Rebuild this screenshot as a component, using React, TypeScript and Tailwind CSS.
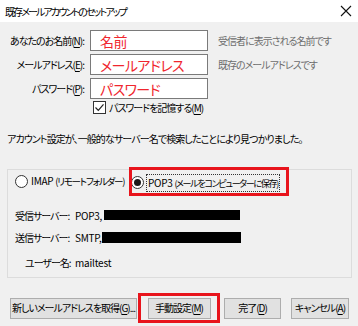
import React from 'react';

const Mn: React.FC<{ k: string }> = ({ k }) => <span className="underline underline-offset-2">{k}</span>;

const Radio: React.FC<{ checked?: boolean }> = ({ checked }) => (
  <span className="w-[13px] h-[13px] rounded-full border border-[#333] bg-white flex items-center justify-center shrink-0">
    {checked && <span className="w-[7px] h-[7px] rounded-full bg-[#1a1a1a]" />}
  </span>
);

const Field: React.FC<{ label: React.ReactNode; value: string; hint?: string }> = ({ label, value, hint }) => (
  <div className="flex items-center h-[21px]">
    <div className="w-[85px] text-right pr-[1px]">{label}</div>
    <div className="ml-[5px] w-[118px] h-[21px] bg-white border border-[#7a7a7a] flex items-center pl-[9px] text-[14px] tracking-[-0.6px] text-[#f0262e] leading-none">
      {value}
    </div>
    {hint && <div className="ml-[10px] text-[#6d6d6d]">{hint}</div>}
  </div>
);

const Button: React.FC<{ w: string; children: React.ReactNode }> = ({ w, children }) => (
  <button className={`${w} shrink-0 h-[21px] bg-[#e1e1e1] border border-[#adadad] flex items-center justify-center leading-none`}>
    {children}
  </button>
);

const App: React.FC = () => {
  return (
    <div className="w-[358px] h-[326px] bg-[#f0f0f0] text-[10px] tracking-[-1px] whitespace-nowrap text-black font-['Noto_Sans_CJK_JP','Noto_Sans',sans-serif] [font-feature-settings:'palt'] overflow-hidden">
      <div className="h-[22px] bg-white flex items-center justify-between pl-[5px] pr-[5px]">
        <span className="tracking-[-1.9px]">既存メールアカウントのセットアップ</span>
        <svg width="12" height="12" viewBox="0 0 12 12" className="mr-[1px]">
          <path d="M1 1 L11 11 M11 1 L1 11" stroke="#111" strokeWidth="1.1" />
        </svg>
      </div>

      <div className="mt-[8px] flex flex-col gap-[3px]">
        <Field label={<>あなたのお名前(<Mn k="N" />):</>} value="名前" hint="受信者に表示される名前です" />
        <Field label={<>メールアドレス(<Mn k="E" />):</>} value="メールアドレス" hint="既存のメールアドレスです" />
        <Field label={<>パスワード(<Mn k="P" />):</>} value="パスワード" />
      </div>

      <div className="mt-[2px] ml-[93px] flex items-center gap-[3px] h-[13px]">
        <span className="w-[13px] h-[13px] border border-[#333] bg-white flex items-center justify-center">
          <svg width="11" height="11" viewBox="0 0 11 11">
            <path d="M1.5 5.5 L4.3 8.3 L9.5 2.3" stroke="#222" strokeWidth="1.2" fill="none" />
          </svg>
        </span>
        <span>パスワードを記憶する(<Mn k="M" />)</span>
      </div>

      <div className="mt-[16px] ml-[7px] h-[16px] flex items-center tracking-[-0.9px]">
        アカウント設定が、一般的なサーバー名で検索したことにより見つかりました。
      </div>

      <div className="relative mt-[23px] ml-[7px] w-[345px] h-[109px] border border-[#dcdcdc]">
        <div className="flex items-center h-[22px] pl-[7px]">
          <Radio />
          <span className="ml-[3px] text-[9.5px] tracking-[-1.2px]">
            <span className="text-[10px] tracking-[-0.3px]">IMAP </span>(リモートフォルダー)
          </span>
        </div>
        <div className="absolute left-[123px] top-[4px] flex items-center h-[17px]">
          <Radio checked />
          <span className="ml-[2px] px-[1px] border border-dotted border-[#333] leading-[15px] text-[9px] tracking-[-1.3px]">
            <span className="text-[10px] tracking-[-0.3px]">POP3 </span>(メールをコンピューターに保存)
          </span>
        </div>
        <div className="absolute left-[121px] top-[-3px] w-[160px] h-[29px] border-[3px] border-[#e8141c]" />

        <div className="mt-[15px] flex items-center h-[16px]">
          <span className="w-[67px] pl-[7px]">受信サーバー:</span>
          <span className="tracking-[-0.3px]">POP3,</span>
          <span className="ml-[2px] w-[136px] h-[10px] bg-black" />
        </div>
        <div className="mt-[6px] flex items-center h-[16px]">
          <span className="w-[67px] pl-[7px]">送信サーバー:</span>
          <span className="tracking-[-0.3px]">SMTP,</span>
          <span className="ml-[1px] w-[139px] h-[11px] bg-black" />
        </div>
        <div className="mt-[9px] flex items-center h-[16px]">
          <span className="w-[67px] pl-[17px]">ユーザー名:</span>
          <span className="tracking-[-0.2px]">mailtest</span>
        </div>
      </div>

      <div className="mt-[15px] ml-[10px] flex items-center">
        <Button w="w-[127px]">新しいメールアドレスを取得(<Mn k="G" />)...</Button>
        <div className="ml-[1px] shrink-0 w-[82px] h-[30px] border-[3px] border-[#e8141c] flex items-center justify-center">
          <Button w="w-[63px]">手動設定(<Mn k="M" />)</Button>
        </div>
        <div className="ml-[4px] shrink-0">
          <Button w="w-[57px]">完了(<Mn k="D" />)</Button>
        </div>
        <div className="ml-[10px] shrink-0">
          <Button w="w-[58px]">キャンセル(<Mn k="A" />)</Button>
        </div>
      </div>
    </div>
  );
};

export default App;
